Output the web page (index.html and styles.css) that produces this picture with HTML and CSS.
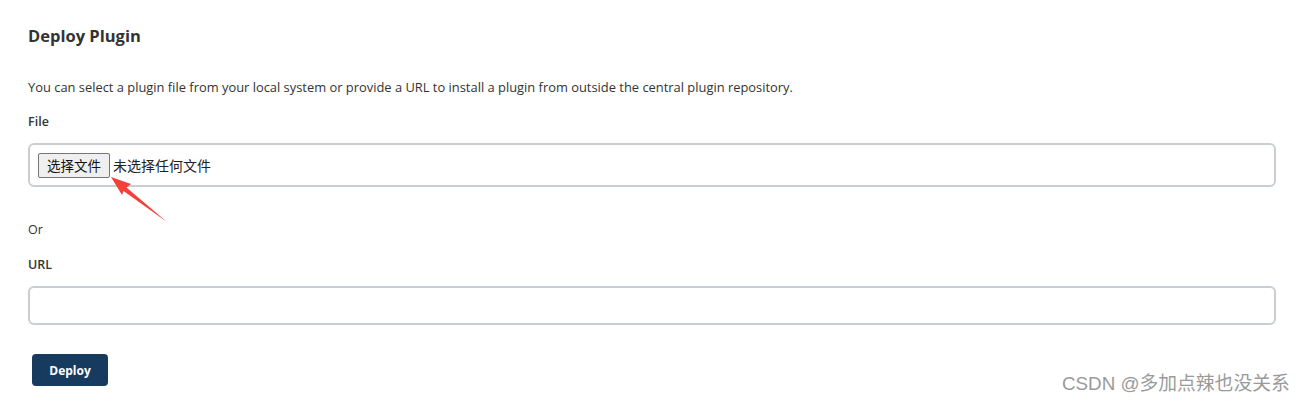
FILE: index.html
```html
<!DOCTYPE html>
<html>
<head>
<meta charset="utf-8">
<link rel="stylesheet" href="styles.css">
</head>
<body>
<div class="page">
  <h1 class="title">Deploy Plugin</h1>
  <p class="desc">You can select a plugin file from your local system or provide a URL to install a plugin from outside the central plugin repository.</p>
  <div class="label">File</div>
  <div class="field file-field">
    <span class="file-btn">选择文件</span>
    <span class="file-text">未选择任何文件</span>
  </div>
  <div class="or">Or</div>
  <div class="label url-label">URL</div>
  <div class="field url-field"></div>
  <button class="deploy">Deploy</button>
</div>
<svg class="arrow" width="1308" height="404" viewBox="0 0 1308 404">
  <polygon points="111,177 131,184 126.5,187.5 167,222 123.5,191 122,195" fill="#f2403a"/>
</svg>
<div class="watermark">CSDN @多加点辣也没关系</div>
</body>
</html>
```
FILE: styles.css
```css
html, body {
  margin: 0;
  padding: 0;
  background: #fff;
}
body {
  width: 1308px;
  height: 404px;
  position: relative;
  overflow: hidden;
  font-family: "Open Sans", "Noto Sans", "Noto Sans CJK SC", sans-serif;
  color: #333;
}
.page {
  padding: 24px 32px 0 28px;
  display: flex;
  flex-direction: column;
  align-items: flex-start;
}
.title {
  margin: 0;
  font-size: 16.5px;
  font-weight: 700;
  line-height: 24px;
  color: #333;
}
.desc {
  margin: 30px 0 0;
  font-size: 12.9px;
  line-height: 18px;
  color: #333;
}
.label {
  margin-top: 17px;
  font-size: 12.5px;
  font-weight: 600;
  line-height: 18px;
  color: #333;
}
.field {
  box-sizing: border-box;
  width: 1248px;
  border: 2px solid #c9ced3;
  border-radius: 6px;
  background: #fff;
}
.file-field {
  margin-top: 12px;
  height: 44px;
  display: flex;
  align-items: center;
  padding-left: 8px;
}
.file-btn {
  box-sizing: border-box;
  height: 25px;
  width: 72px;
  display: flex;
  align-items: center;
  justify-content: center;
  border: 1px solid #767676;
  border-radius: 2px;
  background: #efefef;
  font-family: "Noto Sans CJK SC", sans-serif;
  font-size: 13.5px;
  color: #111;
}
.file-text {
  margin-left: 3px;
  font-family: "Noto Sans CJK SC", sans-serif;
  font-size: 14px;
  color: #222;
}
.or {
  margin-top: 34px;
  font-size: 12.5px;
  line-height: 18px;
  color: #333;
}
.url-label {
  margin-top: 17px;
}
.url-field {
  margin-top: 12px;
  height: 39px;
}
.deploy {
  margin: 29px 0 0 4px;
  width: 76px;
  height: 32px;
  border: none;
  border-radius: 4px;
  background: #163b5f;
  color: #fff;
  font-family: "Open Sans", sans-serif;
  font-weight: 700;
  font-size: 12px;
  padding: 0;
}
.arrow {
  position: absolute;
  left: 0;
  top: 0;
  pointer-events: none;
}
.watermark {
  position: absolute;
  left: 1062px;
  top: 373px;
  font-family: "Liberation Sans", "Noto Sans CJK SC", sans-serif;
  font-size: 18.8px;
  line-height: 22px;
  color: #9a9a9a;
}
```
